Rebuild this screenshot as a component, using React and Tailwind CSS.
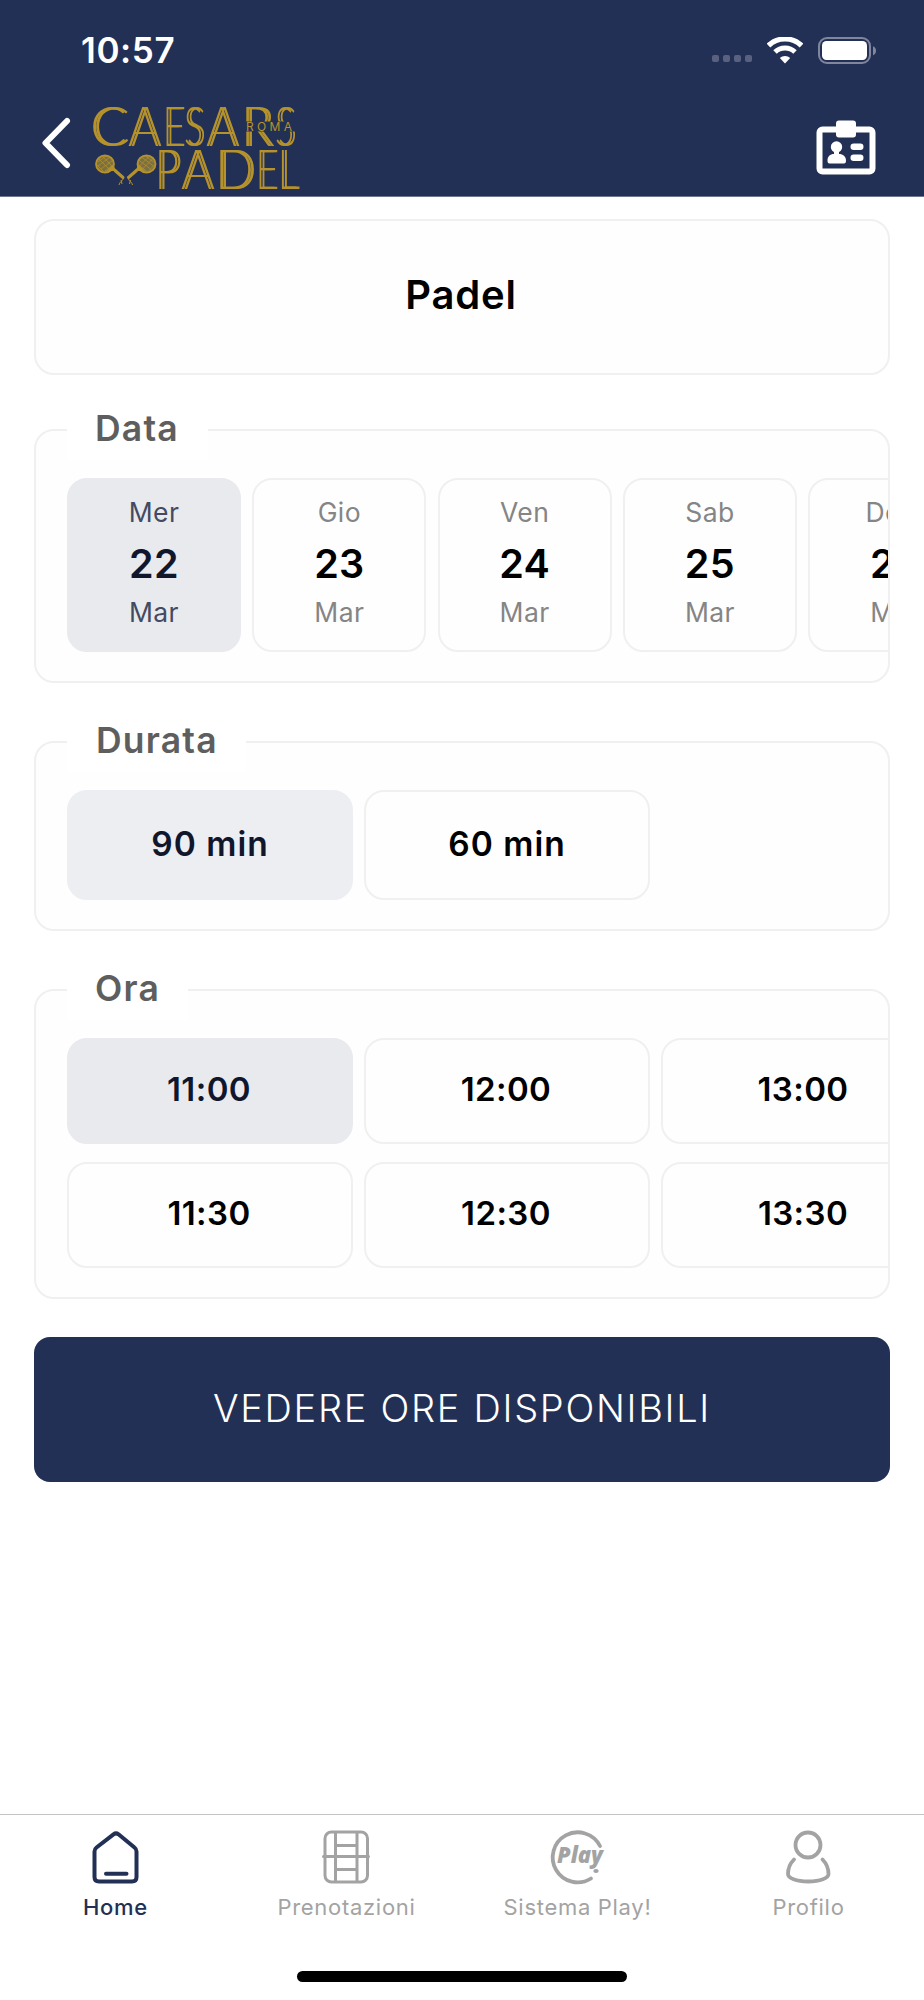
import clsx from 'clsx';

const days = [
  { name: 'Mer', day: '22', month: 'Mar' },
  { name: 'Gio', day: '23', month: 'Mar' },
  { name: 'Ven', day: '24', month: 'Mar' },
  { name: 'Sab', day: '25', month: 'Mar' },
  { name: 'Dom', day: '26', month: 'Mar' },
];

const durations = ['90 min', '60 min'];

const hours = [
  ['11:00', '11:30'],
  ['12:00', '12:30'],
  ['13:00', '13:30'],
];

// letter, x, width, baseline
const logoLetters = [
  ['C', 92, 37, 146],
  ['A', 130, 31, 146],
  ['E', 165, 20, 146],
  ['S', 186, 19, 146],
  ['A', 208, 31, 146],
  ['R', 243, 31, 146],
  ['S', 277, 19, 146],
  ['P', 157, 24, 189],
  ['A', 183, 31, 189],
  ['D', 217, 39, 189],
  ['E', 258, 20, 189],
  ['L', 280, 19, 189],
];

function Racket() {
  return (
    <g>
      <ellipse cx="105" cy="164" rx="9" ry="8.500" fill="#7d7040" stroke="#b5922c" strokeWidth="1.800" />
      <path
        d="M98 162l8-6M98 166l12-9M101 169l12-9M105 171l8-6M99 159l11 11M103 157l10 10M97 165l6 6"
        stroke="#b5922c"
        strokeWidth="0.700"
      />
      <path d="M113.500 164c0 3 2 5 4 7l-6 0c-2-1-4 0-6 1z" fill="#b5922c" />
      <path d="M115 170.500l8 7" stroke="#b5922c" strokeWidth="3" strokeLinecap="round" />
      <path d="M123 179c-1 3-3 2-4 6M121 180l1 4" fill="none" stroke="#b5922c" strokeWidth="1" />
    </g>
  );
}

function Logo() {
  return (
    <svg className="h-[90px] w-[212px] overflow-visible" viewBox="90 104 212 90">
      {/* the hard drop shadow gives the letters their inline stroke */}
      <g
        className="drop-shadow-[3px_0_0_#b5922c]"
        fill="#b5922c"
        fontFamily="Lato"
        fontWeight="300"
        fontSize="54.500"
      >
        {logoLetters.map(([char, x, width, y]) => (
          <text key={`${char}${x}`} x={x - 2} y={y - 0.5} textLength={width} lengthAdjust="spacingAndGlyphs">
            {char}
          </text>
        ))}
      </g>
      <rect x="244" y="121.500" width="54" height="10" fill="#233055" />
      <text x="246" y="130.700" fill="#b5922c" fontFamily="Inter" fontSize="12" textLength="46">ROMA</text>
      <Racket />
      <g transform="translate(251.500 0) scale(-1 1)">
        <Racket />
      </g>
    </svg>
  );
}

function StatusBar() {
  return (
    <div className="flex h-[100px] items-center justify-between pr-[47px] pl-[81px]">
      <span className="text-[35px] leading-none font-semibold tracking-[0.6px]">10:57</span>
      <div className="flex items-center">
        <div className="mt-[17px] mr-[15px] flex gap-1">
          <i className="size-[7px] rounded-[2px] bg-[#5a6180]" />
          <i className="size-[7px] rounded-[2px] bg-[#5a6180]" />
          <i className="size-[7px] rounded-[2px] bg-[#5a6180]" />
          <i className="size-[7px] rounded-[2px] bg-[#5a6180]" />
        </div>
        <svg className="mr-[15px] h-[27px] w-9" viewBox="0 0 36 27" fill="none" stroke="#fff">
          <path d="M1.500 8.500A24 24 0 0 1 34.500 8.500" strokeWidth="5.200" />
          <path d="M8 15A14.500 14.500 0 0 1 28 15" strokeWidth="5" />
          <path d="M12.800 21a7.500 7.500 0 0 1 10.400 0L18 26.500z" fill="#fff" stroke="none" />
        </svg>
        <svg className="h-[27px] w-[59px]" viewBox="0 0 59 27">
          <rect x="1" y="1" width="51" height="25" rx="8" fill="none" stroke="#80869d" strokeWidth="2" />
          <rect x="4" y="4" width="45" height="19" rx="4.500" fill="#fff" />
          <path d="M55 9.300c4 1.500 4 7.500 0 9z" fill="#80869d" />
        </svg>
      </div>
    </div>
  );
}

function Header() {
  return (
    <header className="h-[197px] border-b border-[#6d7590] bg-[#233055] text-white">
      <StatusBar />
      <div className="flex h-[94px] items-start">
        <svg className="mt-[17px] ml-[41px] h-[52px] w-[30px]" viewBox="0 0 30 52" fill="none">
          <path d="M26 4L4.500 26 26 48" stroke="#fff" strokeWidth="6" strokeLinecap="round" strokeLinejoin="round" />
        </svg>
        <div className="mt-1 ml-[19px]">
          <Logo />
        </div>
        <svg className="mt-[20px] mr-[48px] ml-auto h-[56px] w-[60px]" viewBox="0 0 60 56" fill="#fff">
          <rect x="3.500" y="9.500" width="53" height="42" rx="3" fill="none" stroke="#fff" strokeWidth="6" />
          <rect x="20" y="0.500" width="20" height="17" rx="3" />
          <circle cx="20.500" cy="27" r="5.700" />
          <path d="M18 29h5v5c4 0 7 2.500 7 6.500 0 2-.5 3-2 3H13.500c-1.500 0-2-1-2-3 0-4 2.500-6.500 6.500-6.500z" />
          <rect x="34.500" y="23.500" width="13" height="6.500" rx="3.200" />
          <rect x="34.500" y="34.500" width="13" height="6.500" rx="3.200" />
        </svg>
      </div>
    </header>
  );
}

function Section({ title, className, legendClass, children }) {
  return (
    <section className={clsx('relative rounded-[20px] border-2 border-[#f0f0f0] bg-[#fefefe]', className)}>
      <h2
        className={clsx(
          'absolute -top-[31px] left-[31px] flex h-[60px] items-center bg-white pb-[2px] text-[35.5px] font-semibold tracking-[1.2px] text-[#5e5e5e]',
          legendClass
        )}
      >
        {title}
      </h2>
      <div className="h-full overflow-hidden pt-[47px] pl-[31px]">{children}</div>
    </section>
  );
}

function Slot({ label, selected, className }) {
  return (
    <button
      className={clsx(
        'flex w-[286px] shrink-0 items-center justify-center rounded-[20px] border-2 font-semibold',
        selected ? 'text-[#10172d]' : 'border-[#f0f0f0] bg-[#fefefe] text-black',
        className
      )}
    >
      {label}
    </button>
  );
}

function DayTile({ name, day, month, selected }) {
  return (
    <button
      className={clsx(
        'flex h-[174px] w-[174px] shrink-0 flex-col items-center rounded-[20px] border-2 pt-[14px]',
        selected
          ? 'border-[#e9eaee] bg-[#e9eaee] text-[#434a61]'
          : 'border-[#f0f0f0] bg-[#fefefe] text-[#858585]'
      )}
    >
      <span className="text-[26.5px] leading-9 tracking-[0.4px]">{name}</span>
      <span
        className={clsx(
          'mt-2 text-[39.5px] leading-[52px] font-semibold tracking-[0.3px]',
          selected ? 'text-[#10172d]' : 'text-black'
        )}
      >
        {day}
      </span>
      <span className="mt-1 text-[26.5px] leading-9 tracking-[0.4px]">{month}</span>
    </button>
  );
}

function HomeIcon() {
  return (
    <svg className="h-[54px] w-[54px]" viewBox="0 0 54 54" fill="none" stroke="currentColor" strokeWidth="4" strokeLinecap="round" strokeLinejoin="round">
      <path d="M5.500 21.500c0-2 .7-3 2-4L24.500 4.300c1.700-1.300 3.300-1.300 5 0L45.500 17.500c1.300 1 2 2 2 4V47c0 3-1.500 4.500-4.500 4.500H10C7 51.500 5.500 50 5.500 47z" />
      <path d="M17 43.800h20.500" />
    </svg>
  );
}

function CourtIcon() {
  return (
    <svg className="h-[54px] w-[54px]" viewBox="0 0 54 54" fill="none" stroke="currentColor" strokeWidth="3" strokeLinecap="round">
      <rect x="5" y="2" width="42.500" height="50" rx="6.500" />
      <path d="M15.500 3v48M37 3v48M15.500 15.500H37M3.500 26.500h45M15.500 39.500H37" />
    </svg>
  );
}

function PlayIcon() {
  return (
    <svg className="h-[54px] w-[54px] overflow-visible" viewBox="0 0 54 54" fill="currentColor">
      <path d="M49 16A25 25 0 1 0 40 48.500" fill="none" stroke="currentColor" strokeWidth="3.800" strokeLinecap="round" />
      <text x="6" y="33" fontFamily="Open Sans" fontStyle="italic" fontWeight="800" fontSize="23" textLength="46" lengthAdjust="spacingAndGlyphs">Play</text>
      <ellipse cx="45" cy="41" rx="2.700" ry="2" />
    </svg>
  );
}

function ProfileIcon() {
  return (
    <svg className="h-[54px] w-[54px]" viewBox="0 0 54 54" fill="none" stroke="currentColor" strokeWidth="3.800" strokeLinecap="round">
      <circle cx="26" cy="15" r="12.500" />
      <path d="M12 29.500C7.500 34 6 40 6 44c0 4 8 7.500 20.200 7.500S46.500 48 46.500 44c0-4-1.500-10-6-14.500" />
    </svg>
  );
}

const tabs = [
  { label: 'Home', icon: <HomeIcon />, active: true },
  { label: 'Prenotazioni', icon: <CourtIcon /> },
  { label: 'Sistema Play!', icon: <PlayIcon /> },
  { label: 'Profilo', icon: <ProfileIcon /> },
];

function TabBar() {
  return (
    <footer className="mt-auto h-[186px] border-t border-[#c4c4c4] bg-white">
      <nav className="grid grid-cols-4 pt-[15px]">
        {tabs.map((tab) => (
          <a
            key={tab.label}
            className={clsx(
              'flex flex-col items-center',
              tab.active ? 'font-medium text-[#233055]' : 'text-[#a3a3a3]'
            )}
          >
            {tab.icon}
            <span className="mt-[9px] text-[22px] leading-7 tracking-[0.7px]">{tab.label}</span>
          </a>
        ))}
      </nav>
      <div className="mx-auto mt-[50px] h-[11px] w-[330px] rounded-full bg-black" />
    </footer>
  );
}

export default function App() {
  return (
    <div className="flex h-[2000px] w-[924px] flex-col overflow-hidden bg-white font-[Inter,sans-serif]">
      <Header />
      <main className="flex flex-col px-[34px] pt-[22px]">
        <div className="flex h-[156px] items-center justify-center rounded-[20px] border-2 border-[#f0f0f0] bg-[#fefefe] pr-[2px] pb-1 text-[40px] font-semibold tracking-[0.8px] text-black">
          Padel
        </div>

        <Section title="Data" className="mt-[54px] h-[254px]" legendClass="w-[141px] pl-[28px]">
          <div className="flex gap-[11.3px]">
            {days.map((item, i) => (
              <DayTile key={item.day} {...item} selected={i === 0} />
            ))}
          </div>
        </Section>

        <Section title="Durata" className="mt-[58px] h-[190px]" legendClass="w-[179px] pl-[29px]">
          <div className="flex gap-[11px]">
            {durations.map((label, i) => (
              <Slot
                key={label}
                label={label}
                selected={i === 0}
                className={clsx('h-[110px] pb-[2px] text-[33.5px] tracking-[1px]', i === 0 && 'border-[#edeef2] bg-[#edeef2]')}
              />
            ))}
          </div>
        </Section>

        <Section title="Ora" className="mt-[58px] h-[310px]" legendClass="w-[121px] pl-[28px]">
          <div className="flex gap-[11px]">
            {hours.map((column, i) => (
              <div key={column[0]} className="flex flex-col gap-[18px]">
                {column.map((label, j) => (
                  <Slot
                    key={label}
                    label={label}
                    selected={i === 0 && j === 0}
                    className={clsx('h-[106px] pr-[2px] pb-[3px] text-[33px] tracking-[0.4px]', i === 0 && j === 0 && 'border-[#e9eaee] bg-[#e9eaee]')}
                  />
                ))}
              </div>
            ))}
          </div>
        </Section>

        <button className="mt-[38px] flex h-[145px] items-center justify-center rounded-2xl bg-[#233055] pb-[2px] text-[38px] font-[350] tracking-[1.7px] text-white">
          VEDERE ORE DISPONIBILI
        </button>
      </main>
      <TabBar />
    </div>
  );
}
